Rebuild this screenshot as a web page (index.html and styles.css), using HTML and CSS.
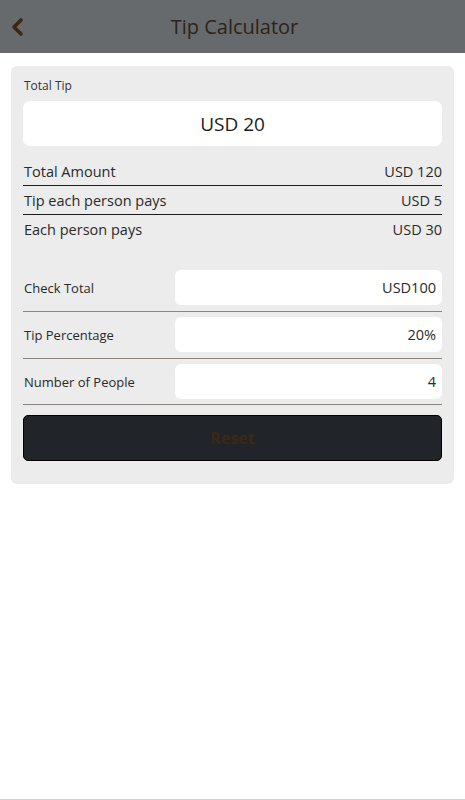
FILE: index.html
```html
<!DOCTYPE html>
<html>
	<head>
		<meta charset="UTF-8">
		<title>Tip Calculator</title>
		<link rel="stylesheet" href="styles.css">
	</head>
	<body>
		<div class="page">
			<!--顶部栏-->
			<div class="topbar">
				<a class="back" href="javascript:;">
					<svg width="16" height="20" viewBox="0 0 16 20">
						<polyline points="11,3 4,10 11,17" fill="none" stroke="#3a2812" stroke-width="3.6" stroke-linecap="round" stroke-linejoin="round"/>
					</svg>
				</a>
				<div class="title">Tip Calculator</div>
			</div>

			<div class="card">
				<div class="tip-label">Total Tip</div>
				<div class="tip-box">USD 20</div>

				<!--结果-->
				<div class="results">
					<div class="res-row"><span>Total Amount</span><span>USD 120</span></div>
					<div class="res-row"><span>Tip each person pays</span><span>USD 5</span></div>
					<div class="res-row last"><span>Each person pays</span><span>USD 30</span></div>
				</div>

				<!--输入-->
				<div class="inputs">
					<div class="in-row">
						<label>Check Total</label>
						<input type="text" value="USD100">
					</div>
					<div class="in-row">
						<label>Tip Percentage</label>
						<input type="text" value="20%">
					</div>
					<div class="in-row">
						<label>Number of People</label>
						<input type="text" value="4">
					</div>
				</div>

				<button class="reset">Reset</button>
			</div>

			<div class="spacer"></div>
			<div class="bottom-line"></div>
		</div>
	</body>
</html>
```

FILE: styles.css
```css
*{
	margin: 0;
	padding: 0;
	box-sizing: border-box;
}

body{
	font-family: "Open Sans", "Noto Sans", sans-serif;
	background-color: #fff;
	color: #222;
}

.page{
	min-height: 800px;
	display: flex;
	flex-direction: column;
}

/*顶部栏*/
.topbar{
	height: 53px;
	background-color: #666a6d;
	display: flex;
	align-items: center;
	position: relative;
}

.back{
	display: flex;
	margin-left: 10px;
	margin-top: 1px;
}

.title{
	flex: 1;
	text-align: center;
	font-size: 20px;
	color: #2e2317;
	margin-right: 22px;
}

/*卡片*/
.card{
	margin: 13px 11px 0;
	background-color: #ececec;
	border-radius: 6px;
	padding: 12px 12px 23px 12px;
}

.tip-label{
	font-size: 12px;
	line-height: 16px;
	color: #333;
	padding-left: 1px;
}

.tip-box{
	margin-top: 7px;
	height: 45px;
	background-color: #fff;
	border-radius: 7px;
	display: flex;
	align-items: center;
	justify-content: center;
	font-size: 19px;
	color: #1c1c1c;
}

.results{
	margin-top: 11px;
}

.res-row{
	display: flex;
	justify-content: space-between;
	font-size: 14.5px;
	line-height: 21px;
	padding: 4px 0 3px 1px;
	border-bottom: 1px solid #1a1a1a;
	color: #2a2a2a;
}

.res-row.last{
	border-bottom: none;
}

.inputs{
	margin-top: 22px;
}

.in-row{
	display: flex;
	align-items: center;
	padding: 5px 0 6px 0;
	border-bottom: 1px solid #8a857f;
}

.in-row:last-child{
	padding-bottom: 5px;
}

.in-row label{
	width: 152px;
	font-size: 13px;
	color: #2a2a2a;
	padding-left: 1px;
}

.in-row input{
	flex: 1;
	height: 35px;
	border: none;
	border-radius: 6px;
	background-color: #fff;
	text-align: right;
	padding-right: 6px;
	font-family: "Open Sans", "Noto Sans", sans-serif;
	font-size: 14.5px;
	color: #2a2a2a;
	outline: none;
}

/*重置按钮*/
.reset{
	display: block;
	width: 100%;
	margin-top: 10px;
	height: 46px;
	background-color: #212529;
	border: 1px solid #000;
	border-radius: 5px;
	font-family: "Open Sans", "Noto Sans", sans-serif;
	font-size: 16px;
	font-weight: bold;
	color: #3a2a14;
}

.spacer{
	flex: 1;
}

.bottom-line{
	height: 1px;
	background-color: #d0d0d0;
}
```
